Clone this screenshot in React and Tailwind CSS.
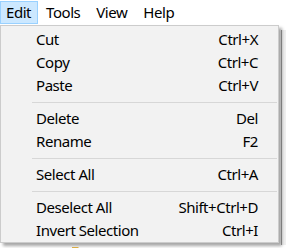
import React from 'react';

const menuBar = ['Edit', 'Tools', 'View', 'Help'];

const items = [
  { label: 'Cut', key: 'Ctrl+X' },
  { label: 'Copy', key: 'Ctrl+C' },
  { label: 'Paste', key: 'Ctrl+V' },
  { sep: true },
  { label: 'Delete', key: 'Del' },
  { label: 'Rename', key: 'F2' },
  { sep: true },
  { label: 'Select All', key: 'Ctrl+A' },
  { sep: true },
  { label: 'Deselect All', key: 'Shift+Ctrl+D' },
  { label: 'Invert Selection', key: 'Ctrl+I' },
];

const Folder = () => (
  <svg width="16" height="14" viewBox="0 0 16 14">
    <path d="M0 2h6l2 2h8v10H0z" fill="#e8b84a" />
    <path d="M0 5h16v9H0z" fill="#f8d775" />
  </svg>
);

const App = () => {
  return (
    <div className="relative w-[286px] h-[248px] overflow-hidden bg-white text-black font-['Noto_Sans',sans-serif] text-[15px] tracking-[-0.45px]">
      <div className="flex h-[25px] pt-px">
        {menuBar.map((m, i) => (
          <div
            key={m}
            className={`flex items-center h-[23px] leading-none ${i === 0 ? 'bg-[#cce8ff] border border-[#99d1ff] pl-[5px] pr-[6px]' : 'border border-transparent px-[7px]'}`}
          >
            {m}
          </div>
        ))}
      </div>

      <div className="flex items-center gap-[9px] pl-[72px] pt-[216px]">
        <Folder />
        <span>TEST_1</span>
      </div>
      <div className="absolute right-0 top-[30px] w-[5px] h-[215px] border-l border-[#a0a0a0] bg-[#f0f0f0]" />

      <div className="absolute left-0 top-[25px] w-[279px] h-[218px] bg-[#f2f2f2] border border-[#cccccc] shadow-[3px_3px_3px_rgba(0,0,0,0.35)] py-[2px]">
        {items.map((it, i) =>
          it.sep ? (
            <div key={i} className="h-[10px] flex items-center pl-[31px] pr-[1px]">
              <div className="h-px w-full bg-[#d7d7d7]" />
            </div>
          ) : (
            <div key={i} className="h-[23px] flex items-center justify-between pl-[35px] pr-[20px] leading-none">
              <span>{it.label}</span>
              <span>{it.key}</span>
            </div>
          )
        )}
      </div>
    </div>
  );
};

export default App;
